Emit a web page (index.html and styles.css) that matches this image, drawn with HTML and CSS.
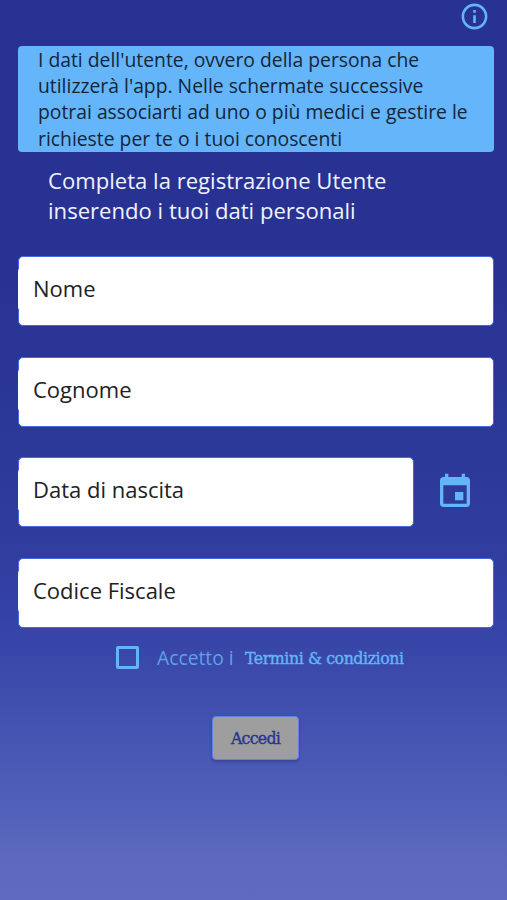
FILE: index.html
```html
<!DOCTYPE html>
<html lang="it">
<head>
<meta charset="utf-8">
<title>Registrazione Utente</title>
<link rel="stylesheet" href="styles.css">
</head>
<body>
<main class="screen">
  <header class="topbar">
    <svg class="info" viewBox="0 0 24 24" aria-label="Informazioni"><path fill="currentColor" d="M11 7h2v2h-2zm0 4h2v6h-2zm1-9C6.48 2 2 6.48 2 12s4.48 10 10 10 10-4.480 10-10S17.520 2 12 2zm0 18c-4.410 0-8-3.590-8-8s3.590-8 8-8 8 3.590 8 8-3.590 8-8 8z"/></svg>
  </header>
  <p class="notice">I dati dell'utente, ovvero della persona che<br>utilizzerà l'app. Nelle schermate successive<br>potrai associarti ad uno o più medici e gestire le<br>richieste per te o i tuoi conoscenti</p>
  <h1 class="title">Completa la registrazione Utente<br>inserendo i tuoi dati personali</h1>
  <form class="form">
    <div class="field"><span>Nome</span></div>
    <div class="field"><span>Cognome</span></div>
    <div class="row">
      <div class="field"><span>Data di nascita</span></div>
      <svg class="calendar" viewBox="0 0 24 24" aria-label="Calendario"><path fill="currentColor" d="M17 12h-5v5h5v-5zM16 1v2H8V1H6v2H5c-1.110 0-1.990.9-1.990 2L3 19c0 1.100.89 2 2 2h14c1.100 0 2-.9 2-2V5c0-1.100-.9-2-2-2h-1V1h-2zm3 18H5V8h14v11z"/></svg>
    </div>
    <div class="field"><span>Codice Fiscale</span></div>
    <div class="terms">
      <span class="checkbox"></span>
      <span class="accept">Accetto i</span>
      <a class="link">Termini &amp; condizioni</a>
    </div>
    <button class="submit" type="button">Accedi</button>
  </form>
</main>
</body>
</html>
```
FILE: styles.css
```css
* { box-sizing: border-box; }

body {
  margin: 0;
  font-family: "Open Sans", sans-serif;
}

.screen {
  height: 900px;
  padding: 0 13px 0 18px;
  overflow: hidden;
  background: linear-gradient(#283293 0, #283293 270px, #2c3999 450px, #303c9e 540px, #3745a8 640px, #4c5cb6 780px, #5c69be 860px, #5e6bc0 900px);
}

.topbar {
  display: flex;
  justify-content: flex-end;
  height: 46px;
  padding-right: 4px;
  color: #64b5f6;
}

.info {
  width: 31px;
  height: 31px;
  margin-top: 0.5px;
}

.notice {
  height: 106px;
  margin: 0;
  padding: 0.7px 0 0 20px;
  border-radius: 4px;
  background: #64b5f9;
  color: #14253a;
  font-size: 19.33px;
  line-height: 26.3px;
  white-space: nowrap;
}

.title {
  height: 60px;
  margin: 13px 0 31px 30px;
  color: #f0f2ff;
  font-size: 22.1px;
  font-weight: 400;
  line-height: 30px;
  white-space: nowrap;
}

.form {
  display: flex;
  flex-direction: column;
}

.field {
  position: relative;
  display: flex;
  align-items: center;
  height: 70px;
  margin-bottom: 30.5px;
  padding: 0 0 5.6px 14px;
  border: 1px solid #4766df;
  border-radius: 5px;
  background: #fff;
  color: #202124;
  font-size: 22px;
}

.field::before {
  content: "";
  position: absolute;
  left: -1.5px;
  top: 12px;
  width: 3px;
  height: 40px;
  border-radius: 2px;
  background: #fff;
}

.row {
  display: flex;
}

.row .field {
  width: 396px;
}

.calendar {
  width: 40px;
  height: 40px;
  margin: 14.5px 0 0 21px;
  color: #64b5f6;
}

.terms {
  display: flex;
  align-items: center;
  height: 30px;
  margin: -15.5px 0 0 97.5px;
  color: #64b5f6;
  white-space: nowrap;
}

.checkbox {
  width: 23px;
  height: 23px;
  border: 3px solid #64b5f6;
  border-radius: 2px;
}

.accept {
  width: 88px;
  margin-left: 18.5px;
  color: #629fe8;
  font-size: 19.3px;
}

.link,
.submit {
  font-family: "DejaVu Serif Condensed", "DejaVu Serif", serif;
  font-size: 17.5px;
  letter-spacing: -0.4px;
  -webkit-text-stroke: 0.4px currentColor;
}

.submit {
  align-self: center;
  width: 87px;
  height: 44px;
  margin: 43.5px 1px 0 0;
  padding: 0;
  border: 1px solid #6380e8;
  border-radius: 4px;
  background: #9e9e9e;
  box-shadow: 0 2px 3px #28358088;
  color: #283593;
  letter-spacing: -0.7px;
}
```
